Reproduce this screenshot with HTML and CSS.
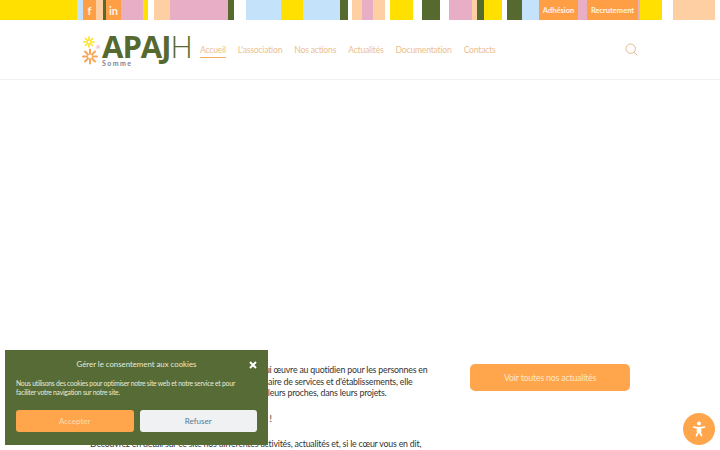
FILE: index.html
```html
<!DOCTYPE html>
<html lang="fr">
<head>
    <meta charset="UTF-8">
    <title>APAJH Somme</title>
    <link rel="stylesheet" href="styles.css">
</head>
<body>
    <div class="page">
        <div class="topbar">
            <div class="social">
                <a class="social-fb" href="#">f</a>
                <a class="social-in" href="#">in</a>
            </div>
            <div class="toplinks">
                <a class="link-adhesion" href="#">Adhésion</a>
                <a class="link-recrutement" href="#">Recrutement</a>
            </div>
        </div>

        <header class="header">
            <a class="logo" href="#">
                <svg class="logo-flower" width="19" height="30" viewBox="0 0 19 30">
                    <g class="petals-yellow">
                        <path d="M7 7V2M7 7V12M7 7H2M7 7H12M7 7L3.500 3.500M7 7L10.500 3.500M7 7L3.500 10.500M7 7L10.500 10.500"/>
                    </g>
                    <g class="petals-pink">
                        <path d="M16 9.500V14.500M13.500 12H18.500M14.300 10.300L17.700 13.700M17.700 10.300L14.300 13.700"/>
                    </g>
                    <g class="petals-orange">
                        <path d="M8 21.500V14.500M8 21.500V28.500M8 21.500H1M8 21.500H15M8 21.500L3 16.500M8 21.500L13 16.500M8 21.500L3 26.500M8 21.500L13 26.500"/>
                    </g>
                    <circle class="flower-hole" cx="8" cy="21.500" r="2"/>
                    <circle class="flower-hole" cx="7" cy="7" r="1.300"/>
                </svg>
                <span class="logo-text">
                    <span class="logo-name"><b>APAJ</b>H</span>
                    <span class="logo-sub">Somme</span>
                </span>
            </a>
            <nav class="nav">
                <a class="active" href="#">Accueil</a>
                <a href="#">L'association</a>
                <a href="#">Nos actions</a>
                <a href="#">Actualités</a>
                <a href="#">Documentation</a>
                <a href="#">Contacts</a>
            </nav>
            <svg class="search" width="13" height="13" viewBox="0 0 13 13">
                <circle cx="5.700" cy="5.700" r="4.700"/>
                <path d="M9 9l3.300 3.300"/>
            </svg>
        </header>

        <main class="content">
            <div class="intro">
                <p>L'APAJH Somme est une association, loi 1901, qui œuvre au quotidien pour les personnes en<br>situation de handicap et de leur famille. Gestionnaire de services et d'établissements, elle<br>accompagne et soutient les personnes suivies et leurs proches, dans leurs projets.</p>
                <p>Bienvenue sur notre site internet, et bonne visite !</p>
                <p>Découvrez en détail sur ce site nos différentes activités, actualités et, si le cœur vous en dit,<br>rejoignez-nous.</p>
            </div>
            <div class="news">
                <a class="news-btn" href="#">Voir toutes nos actualités</a>
            </div>
        </main>

        <div class="cookies">
            <div class="cookies-head">
                <span>Gérer le consentement aux cookies</span>
                <svg class="cookies-close" width="8" height="8" viewBox="0 0 8 8"><path d="M1 1l6 6M7 1L1 7"/></svg>
            </div>
            <p>Nous utilisons des cookies pour optimiser notre site web et notre service et pour<br>faciliter votre navigation sur notre site.</p>
            <div class="cookies-btns">
                <button class="btn-accept">Accepter</button>
                <button class="btn-refuse">Refuser</button>
            </div>
        </div>

        <a class="access" href="#">
            <svg width="14" height="16" viewBox="0 0 14 16">
                <circle cx="7" cy="2.500" r="2"/>
                <path d="M1.500 6c2 .6 3.500 .8 5.500 .8s3.500-.2 5.500-.8M7 6.800v3M7 9.500l-2.500 5M7 9.500l2.500 5M5.500 7v3.500M8.500 7v3.500"/>
            </svg>
        </a>
    </div>
</body>
</html>
```
FILE: styles.css
```css
*{
    box-sizing: border-box;
}
html,body{
    margin:0;
    padding:0;
}
body{
    font-family: Lato, sans-serif;
    color:#333;
    background:white;
}
a{
    text-decoration: none;
}
.page{
    position: relative;
    height:100vh;
    overflow: hidden;
    display: flex;
    flex-direction: column;
}

/* coloured stripes */
.topbar{
    height:20px;
    flex-shrink:0;
    display: flex;
    justify-content: space-between;
    padding:0 82px 0 83px;
    background: linear-gradient(90deg,
        #ffe000 0 77px, #c5e2fb 77px 83px, #ff9f45 83px 96px, #fdcfa3 96px 103px,
        #56692f 103px 106px, #ff9f45 106px 121px, #e8aec6 121px 143px, #ffe000 143px 148px,
        white 148px 154px, #fdcfa3 154px 170px, #e8aec6 170px 228px, #56692f 228px 234px,
        white 234px 246px, #c5e2fb 246px 281px, #ffe000 281px 303px, #c5e2fb 303px 340px,
        #56692f 340px 348px, white 348px 352px, #fdcfa3 352px 362px, #e8aec6 362px 373px,
        #fdcfa3 373px 385px, white 385px 390px, #ffe000 390px 413px, white 413px 422px,
        #56692f 422px 440px, white 440px 449px, #e8aec6 449px 472px, #fdcfa3 472px 477px,
        #56692f 477px 484px, #ffe000 484px 502px, white 502px 507px, #56692f 507px 522px,
        #c5e2fb 522px 539px, #ff9f45 539px 578px, #e8aec6 578px 587px, #ff9f45 587px 638px,
        #e8aec6 638px 640px, #ffe000 640px 662px, white 662px 673px, #fdcfa3 673px 715px,
        white 715px);
}
.social,.toplinks{
    display: flex;
}
.social a,.toplinks a{
    color:#fff4e6;
    font-weight:700;
    display: flex;
    align-items: center;
    justify-content: center;
}
.social a{
    font-size:11px;
}
.social-fb{
    width:13px;
    margin-right:10px;
}
.social-in{
    width:15px;
}
.toplinks a{
    font-size:7.500px;
}
.link-adhesion{
    width:39px;
    margin-right:9px;
}
.link-recrutement{
    width:51px;
}

/* header */
.header{
    height:60px;
    flex-shrink:0;
    display: flex;
    align-items: center;
    padding:0 82px;
    border-bottom:1px solid #f2f2f2;
}
.logo{
    display: flex;
    align-items: center;
    width:118px;
    flex-shrink:0;
}
.logo-flower{
    flex-shrink:0;
}
.petals-yellow path{
    stroke:#ffe22b;
    stroke-width:1.700;
    stroke-linecap:round;
    fill:none;
}
.petals-pink path{
    stroke:#efb9cf;
    stroke-width:.7;
    fill:none;
}
.petals-orange path{
    stroke:#f9a65a;
    stroke-width:2;
    stroke-linecap:round;
    fill:none;
}
.flower-hole{
    fill:white;
}
.logo-text{
    display: flex;
    flex-direction: column;
    margin-left:1px;
}
.logo-name{
    font-family: "Open Sans", sans-serif;
    font-size:31px;
    line-height:28px;
    color:#56692f;
    font-weight:300;
    letter-spacing:-1px;
}
.logo-name b{
    font-weight:700;
}
.logo-sub{
    font-size:7px;
    line-height:7px;
    font-weight:700;
    letter-spacing:1.400px;
    color:#7f7f92;
}
.nav{
    display: flex;
    gap:12px;
    font-size:8.600px;
    line-height:11px;
    letter-spacing:-.2px;
}
.nav a{
    color:#ecc08f;
    padding:4px 0 1px;
    border-bottom:1px solid transparent;
}
.nav a.active{
    border-bottom-color:#f5ab5f;
}
.search{
    margin-left:auto;
    fill:none;
    stroke:#e5bb8f;
    stroke-width:1;
}

/* page content */
.content{
    flex:1;
    display: grid;
    grid-template-columns: 380px 160px;
    justify-content: space-between;
    padding:284px 90px 0 90px;
}
.intro{
    font-size:8.800px;
    line-height:11.700px;
    letter-spacing:-.2px;
}
.intro p{
    margin:0 0 13.500px;
    white-space: nowrap;
}
.news-btn{
    display: block;
    height:27px;
    line-height:27px;
    text-align: center;
    font-size:8.800px;
    letter-spacing:-.2px;
    color:#fbe6c8;
    background:#ffa64d;
    border-radius:5px;
}

/* cookie box on top of the page */
.cookies{
    position: absolute;
    left:5px;
    top:350px;
    width:263px;
    height:95px;
    padding:8px 11px 0 11px;
    background:#566b35;
    color:#e6ead9;
}
.cookies-head{
    display: flex;
    align-items: center;
    justify-content: center;
    position: relative;
    font-size:7.800px;
    height:11px;
}
.cookies-close{
    position: absolute;
    right:0;
    top:3px;
    stroke:white;
    stroke-width:2;
}
.cookies p{
    margin:10px 0 0;
    font-size:6.800px;
    line-height:9px;
    letter-spacing:-.25px;
    white-space: nowrap;
}
.cookies-btns{
    display: flex;
    gap:6px;
    margin-top:13px;
}
.cookies-btns button{
    flex:1;
    height:22px;
    border:none;
    border-radius:3px;
    font-family: inherit;
    font-size:8px;
}
.btn-accept{
    background:#ffa64d;
    color:#f8dcb0;
}
.btn-refuse{
    background:#f0f1f3;
    color:#56798f;
}

/* accessibility button */
.access{
    position: absolute;
    left:683px;
    top:413px;
    width:32px;
    height:32px;
    border-radius:50%;
    background:#ffa64d;
    display: flex;
    align-items: center;
    justify-content: center;
}
.access svg{
    fill:white;
}
.access path{
    stroke:white;
    stroke-width:1.700;
    fill:none;
    stroke-linecap:round;
}
```
